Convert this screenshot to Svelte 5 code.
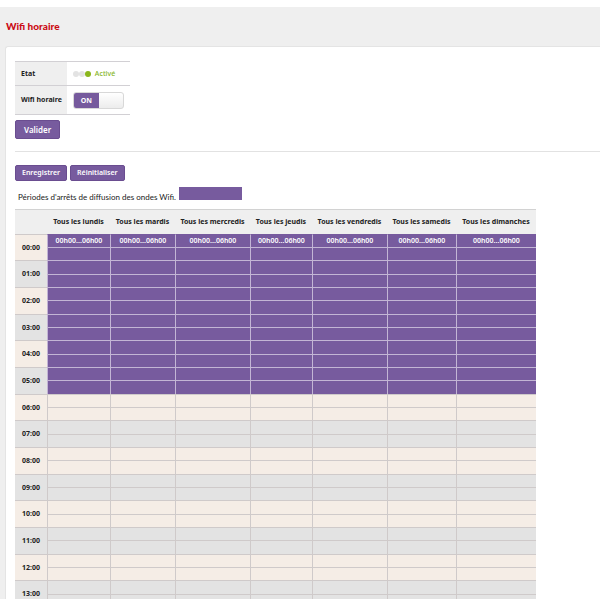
<script lang="ts">
	type Day = { name: string; start: number; end: number; width: number };

	const days: Day[] = [
		{ name: 'Tous les lundis', start: 0, end: 6, width: 63 },
		{ name: 'Tous les mardis', start: 0, end: 6, width: 65 },
		{ name: 'Tous les mercredis', start: 0, end: 6, width: 75 },
		{ name: 'Tous les jeudis', start: 0, end: 6, width: 62 },
		{ name: 'Tous les vendredis', start: 0, end: 6, width: 75 },
		{ name: 'Tous les samedis', start: 0, end: 6, width: 69 },
		{ name: 'Tous les dimanches', start: 0, end: 6, width: 80 }
	];

	// Two slots per hour
	const hours = 14;
	const slots = Array.from({ length: hours * 2 }, (_, i) => i);

	let enabled = $state(true);

	const pad = (n: number) => String(n).padStart(2, '0');
	const isOff = (day: Day, slot: number) => slot >= day.start * 2 && slot < day.end * 2;
	const range = (day: Day) => `${pad(day.start)}h00...${pad(day.end)}h00`;
</script>

<main class="page">
	<h1>Wifi horaire</h1>

	<div class="panel">
		<form class="settings" onsubmit={(e) => e.preventDefault()}>
			<table class="status">
				<tbody>
					<tr>
						<th scope="row">Etat</th>
						<td>
							<span class="state">
								<i class="led"></i><i class="led"></i><i class="led on"></i>
								<span class="state-label">Activé</span>
							</span>
						</td>
					</tr>
					<tr class="tall">
						<th scope="row"><label for="wifi-switch">Wifi horaire</label></th>
						<td>
							<label class="switch" class:off={!enabled}>
								<input id="wifi-switch" type="checkbox" bind:checked={enabled} />
								<span class="switch-on">{enabled ? 'ON' : 'OFF'}</span>
							</label>
						</td>
					</tr>
				</tbody>
			</table>
			<button class="btn large" type="submit">Valider</button>
		</form>

		<section class="planning">
			<div class="actions">
				<button class="btn" type="button">Enregistrer</button>
				<button class="btn" type="button">Réinitialiser</button>
			</div>

			<p class="legend">
				Périodes d'arrêts de diffusion des ondes Wifi.
				<span class="swatch"></span>
			</p>

			<table class="grid">
				<colgroup>
					<col class="hour-col" />
					{#each days as day}
						<col style="width: {day.width}px" />
					{/each}
				</colgroup>
				<thead>
					<tr>
						<td></td>
						{#each days as day}
							<th scope="col">{day.name}</th>
						{/each}
					</tr>
				</thead>
				<tbody>
					{#each slots as slot}
						<tr class:odd={Math.floor(slot / 2) % 2 === 1}>
							{#if slot % 2 === 0}
								<th scope="row" rowspan="2">{pad(slot / 2)}:00</th>
							{/if}
							{#each days as day}
								<td class:busy={isOff(day, slot)}>
									{#if slot === day.start * 2}{range(day)}{/if}
								</td>
							{/each}
						</tr>
					{/each}
				</tbody>
			</table>
		</section>
	</div>
</main>

<style>
	:global(body) {
		margin: 0;
		background: #fff;
		color: #222;
		font-family: 'Noto Sans', 'Open Sans', sans-serif;
		font-size: 7px;
		line-height: 10px;
	}

	.page {
		margin-top: 7px;
		padding: 12px 0 0 5px;
		background: #efefef;
	}

	h1 {
		margin: 0 0 13px;
		padding-left: 1px;
		color: #cb0b14;
		font-family: Lato, sans-serif;
		font-size: 10px;
		line-height: 14px;
		font-weight: 900;
	}

	.panel {
		box-sizing: border-box;
		padding: 14px 0 0 9px;
		background: #fff;
		border: 1px solid #e4e4e4;
		border-right: 0;
		border-bottom: 0;
		border-radius: 3px 0 0;
	}

	.settings {
		padding-bottom: 12px;
		border-bottom: 1px solid #e2e2e2;
	}

	table {
		border-spacing: 0;
	}

	.status {
		width: 115px;
		margin-bottom: 5px;
		border-bottom: 1px solid #d2d0d4;
	}

	.status th,
	.status td {
		height: 23px;
		padding: 0 5px 0 6px;
		border-top: 1px solid #d2d0d4;
		text-align: left;
		white-space: nowrap;
	}

	.status th {
		width: 40px;
		background: #efefef;
	}

	.status .tall th,
	.status .tall td {
		height: 28px;
	}

	.state {
		display: flex;
		align-items: center;
	}

	.led {
		width: 6px;
		height: 6px;
		border-radius: 50%;
		background: #e3e3e3;
	}

	.led.on {
		background: #8ab61c;
	}

	.state-label {
		margin-left: 4px;
		color: #86b51e;
		font-weight: 500;
	}

	.switch {
		display: flex;
		box-sizing: border-box;
		width: 51px;
		height: 17px;
		overflow: hidden;
		border: 1px solid #d8d8d8;
		border-radius: 3px;
		background: linear-gradient(#fff, #ececec);
		cursor: pointer;
	}

	.switch.off {
		justify-content: flex-end;
	}

	.switch input {
		position: absolute;
		opacity: 0;
	}

	.switch-on {
		width: 25px;
		background: #765a9d;
		color: #fff;
		font-weight: 700;
		line-height: 15px;
		text-align: center;
	}

	.btn {
		height: 16px;
		padding: 0 6px;
		border: 1px solid #6a4d90;
		border-radius: 2px;
		background: #775b9e;
		color: #fff;
		font: inherit;
		font-weight: 600;
		cursor: pointer;
	}

	.btn.large {
		display: block;
		height: 19px;
		padding: 0 8px;
		font-size: 8px;
	}

	.planning {
		padding-top: 13px;
	}

	.actions {
		display: flex;
		gap: 3px;
	}

	.legend {
		display: flex;
		align-items: baseline;
		gap: 3px;
		margin: 6px 0 8px;
		padding-left: 3px;
		font-family: Lato, sans-serif;
		font-size: 8px;
		line-height: 8px;
	}

	.swatch {
		width: 63px;
		height: 13px;
		background: #775b9e;
	}

	.grid {
		width: 521px;
		table-layout: fixed;
		text-align: center;
	}

	.hour-col {
		width: 32px;
	}

	.grid th,
	.grid td {
		padding: 0;
		white-space: nowrap;
	}

	.grid thead th,
	.grid thead td {
		height: 24px;
		border-top: 1px solid #d2d2d2;
		background: #efefef;
	}

	.grid tbody tr {
		height: 13px;
		background: #f5ede6;
	}

	.grid tbody tr:nth-child(3n) {
		height: 14px;
	}

	.grid tbody tr.odd {
		background: #e3e3e3;
	}

	.grid tbody th,
	.grid tbody td {
		border-top: 1px solid #cfcaca;
	}

	.grid tbody td {
		border-left: 1px solid #cfcaca;
		color: #fff;
		font-weight: 600;
	}

	.grid tbody td.busy {
		background: #775b9e;
		border-color: #c3b5d5;
	}

	.grid tbody tr:first-child td.busy {
		border-top-color: #775b9e;
	}
</style>
